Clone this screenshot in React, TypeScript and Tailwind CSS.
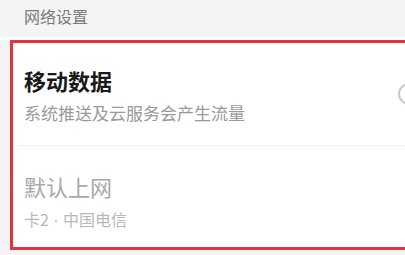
export default function App() {
  return (
    <div
      className="w-[405px] h-[255px] overflow-hidden bg-[#f4f4f4]"
      style={{ fontFamily: '"Noto Sans CJK SC", "Noto Sans", sans-serif' }}
    >
      <div className="h-[37px] pl-6 pt-[5px] text-[16px] leading-[22px] text-[#7a7a7a]">网络设置</div>
      <div className="h-[3px] bg-[#fbfdff]" />
      <div className="ml-[10px] w-[420px] border-[3px] border-[#e0353f] bg-white">
        <div className="relative pl-[11px] pt-[23px] pb-[21px]">
          <div className="text-[22px] leading-[28px] font-bold text-[#1a1a1a]">移动数据</div>
          <div className="mt-[7px] text-[17px] leading-[23px] text-[#9a9a9a]">系统推送及云服务会产生流量</div>
          <div className="absolute left-[385px] top-[40px] h-[22px] w-[40px] rounded-full border-2 border-[#c8c8c8] bg-white" />
        </div>
        <div className="ml-[5px] h-px bg-[#efefef]" />
        <div className="pl-[11px] pt-[26px] pb-[15px]">
          <div className="text-[22px] leading-[28px] text-[#a8a8a8]">默认上网</div>
          <div className="mt-[8px] text-[16px] leading-[22px] text-[#b8b8b8]">
            卡2<span className="font-['Liberation_Sans']"> · </span>中国电信
          </div>
        </div>
      </div>
    </div>
  );
}
